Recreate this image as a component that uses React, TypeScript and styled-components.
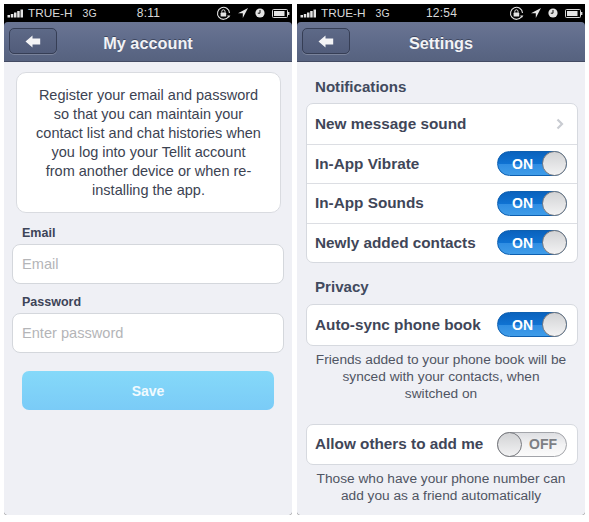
import React from 'react';
import styled, { createGlobalStyle } from 'styled-components';

const GlobalStyle = createGlobalStyle`
  html, body {
    margin: 0;
    background: #fff;
    font-family: "Liberation Sans", Arial, sans-serif;
  }
`;

const Page = styled.div`
  width: 589px;
  height: 522px;
  box-sizing: border-box;
  padding: 4px 4px 7px;
  display: flex;
  gap: 5px;
  overflow: hidden;
`;

const Phone = styled.div`
  width: 288px;
  height: 511px;
  display: flex;
  flex-direction: column;
  background: #000;
  border-radius: 0 0 3px 3px;
  overflow: hidden;
`;

const StatusBar = styled.div`
  height: 18px;
  flex: none;
  display: grid;
  grid-template-columns: 1fr auto 1fr;
  align-items: center;
  padding: 0 2px 0 3px;
  color: #d8d8d8;
  font-size: 11px;
`;

const StatusLeft = styled.div`
  display: flex;
  align-items: center;
  gap: 4px;
`;

const Carrier = styled.span`
  font-size: 11.8px;
`;

const Network = styled.span`
  margin-left: 6px;
  font-size: 10.5px;
`;

const Clock = styled.span`
  font-size: 12px;
  letter-spacing: 0.2px;
`;

const StatusRight = styled.div`
  display: flex;
  align-items: center;
  justify-content: flex-end;
  gap: 7px;
`;

const NavBar = styled.div`
  height: 40px;
  flex: none;
  position: relative;
  display: flex;
  align-items: center;
  justify-content: center;
  padding-top: 3px;
  background: linear-gradient(#6a7593 0, #5f6b8a 50%, #56627f 100%);
  border-bottom: 1px solid #434b63;
  box-sizing: border-box;
  border-radius: 4px 4px 0 0;
`;

const BackButton = styled.div`
  position: absolute;
  left: 5px;
  top: 6px;
  width: 48px;
  height: 26px;
  box-sizing: border-box;
  display: flex;
  align-items: center;
  justify-content: center;
  border: 1px solid #363e55;
  border-radius: 5px;
  background: linear-gradient(#5d6987, #515c7a);
  box-shadow: 0 1px 0 rgba(255, 255, 255, 0.2);
`;

const NavTitle = styled.div`
  color: #f2f3f6;
  font-size: 16.3px;
  font-weight: 700;
  text-shadow: 0 -1px 0 rgba(40, 46, 66, 0.6);
`;

const Body = styled.div<{ $pad: string }>`
  flex: 1;
  display: flex;
  flex-direction: column;
  background: #eff0f5;
  padding: ${(p) => p.$pad};
`;

const InfoCard = styled.div`
  box-sizing: border-box;
  width: 265px;
  height: 141px;
  margin-left: 12px;
  padding: 13px 0 0;
  background: #fff;
  border: 1px solid #d9dbe0;
  border-radius: 10px;
  color: #3c4352;
  font-size: 14.5px;
  line-height: 19px;
  text-align: center;
`;

const FieldLabel = styled.div<{ $top: number }>`
  margin: ${(p) => p.$top}px 0 4px 18px;
  color: #3d4458;
  font-size: 12.5px;
  line-height: 14px;
  font-weight: 700;
`;

const Field = styled.div`
  box-sizing: border-box;
  width: 272px;
  height: 40px;
  margin-left: 8px;
  padding-left: 9px;
  display: flex;
  align-items: center;
  background: #fff;
  border: 1px solid #d4d7dc;
  border-radius: 8px;
  color: #b4b5b8;
  font-size: 14.6px;
`;

const SaveButton = styled.div`
  box-sizing: border-box;
  width: 252px;
  height: 39px;
  margin: 18px 0 0 18px;
  display: flex;
  align-items: center;
  justify-content: center;
  background: linear-gradient(#85d9f9, #7acbf7);
  border-radius: 7px;
  color: #f1fafe;
  font-size: 14px;
  font-weight: 700;
`;

const SectionTitle = styled.div<{ $top: number; $gap: number }>`
  margin: ${(p) => p.$top}px 0 ${(p) => p.$gap}px 18px;
  color: #414a5e;
  font-size: 15.1px;
  line-height: 16px;
  font-weight: 700;
`;

const Group = styled.div`
  box-sizing: border-box;
  width: 272px;
  margin-left: 9px;
  background: #fff;
  border: 1px solid #d6d9df;
  border-radius: 7px;
`;

const Row = styled.div`
  box-sizing: border-box;
  height: 39.5px;
  padding: 0 9px 0 8px;
  display: flex;
  align-items: center;
  justify-content: space-between;
  color: #3f4658;
  font-size: 15.3px;
  font-weight: 700;
  & + & {
    border-top: 1px solid #dcdee3;
  }
`;

const Track = styled.div<{ $on: boolean }>`
  position: relative;
  box-sizing: border-box;
  width: 70px;
  height: 25px;
  flex: none;
  margin-right: 1px;
  display: flex;
  align-items: center;
  border-radius: 13px;
  font-size: 14px;
  font-weight: 700;
  ${(p) =>
    p.$on
      ? `
    padding-left: 14px;
    color: #fff;
    background: linear-gradient(#0a62bd 0, #0f72d2 50%, #2f8de3 51%, #3f9ce8 100%);
    border: 1px solid #0d5fb0;
  `
      : `
    padding-left: 31px;
    color: #7d7f84;
    background: linear-gradient(#dedfe2 0, #f2f2f3 50%, #fbfbfb 100%);
    border: 1px solid #a3a5aa;
  `}
`;

const Knob = styled.div<{ $on: boolean }>`
  position: absolute;
  top: -1px;
  ${(p) => (p.$on ? 'right: -1px;' : 'left: -1px;')}
  width: 25px;
  height: 25px;
  box-sizing: border-box;
  border: 1px solid #77797e;
  border-radius: 50%;
  background: linear-gradient(#d2d3d5, #f2f2f3);
`;

const Chevron = styled.svg`
  margin-right: 4px;
`;

const Note = styled.div<{ $bottom: number }>`
  margin: 5px 0 ${(p) => p.$bottom}px;
  color: #4f5563;
  font-size: 13.7px;
  line-height: 17px;
  text-align: center;
`;

const Signal = () => (
  <svg width="17" height="9" viewBox="0 0 17 9">
    <g fill="#e2e2e2">
      <rect x="0.5" y="6" width="2.5" height="2.5" />
      <rect x="3.8" y="5" width="2.5" height="3.5" />
      <rect x="7" y="3.5" width="2.5" height="5" />
      <rect x="10.2" y="2" width="2.5" height="6.5" />
      <rect x="13.5" y="0.5" width="2.5" height="8" />
    </g>
  </svg>
);

const StatusIcons = () => (
  <StatusRight>
    <svg width="15" height="15" viewBox="0 0 15 15">
      <path d="M12.6 10.5A6 6 0 1 1 13.5 7" fill="none" stroke="#e4e4e4" strokeWidth="1.1" />
      <path d="M11.2 9.6h3.2l-1.6 2.4z" fill="#e4e4e4" />
      <rect x="4.6" y="6.6" width="5.6" height="4" rx="0.6" fill="#e4e4e4" />
      <path d="M5.8 6.6V5.4a1.6 1.6 0 0 1 3.2 0v1.2" fill="none" stroke="#e4e4e4" strokeWidth="1" />
    </svg>
    <svg width="10" height="10" viewBox="0 0 10 10">
      <path d="M10 0 0 5.2h4.8V10z" fill="#e4e4e4" />
    </svg>
    <svg width="10" height="10" viewBox="0 0 10 10">
      <circle cx="5" cy="5" r="4.6" fill="#e4e4e4" />
      <path d="M5 2v3.2H2.8" fill="none" stroke="#111" strokeWidth="1" />
    </svg>
    <svg width="18" height="9" viewBox="0 0 18 9">
      <rect x="0.5" y="0.5" width="15" height="8" rx="1" fill="none" stroke="#d8d8d8" />
      <rect x="2" y="2" width="10.5" height="5" fill="#e4e4e4" />
      <rect x="16" y="3" width="1.4" height="3" fill="#d8d8d8" />
    </svg>
  </StatusRight>
);

const BackArrow = () => (
  <svg width="16" height="13" viewBox="0 0 16 13">
    <path d="M0.5 6.5 7.5 0.5V3.5H15.2V9.5H7.5V12.5z" fill="#f4f4f6" />
  </svg>
);

const Header: React.FC<{ carrier: string; time: string; title: string }> = ({ carrier, time, title }) => (
  <>
    <StatusBar>
      <StatusLeft>
        <Signal />
        <Carrier>{carrier}</Carrier>
        <Network>3G</Network>
      </StatusLeft>
      <Clock>{time}</Clock>
      <StatusIcons />
    </StatusBar>
    <NavBar>
      <BackButton>
        <BackArrow />
      </BackButton>
      <NavTitle>{title}</NavTitle>
    </NavBar>
  </>
);

const Toggle: React.FC<{ on: boolean }> = ({ on }) => (
  <Track $on={on}>
    {on ? 'ON' : 'OFF'}
    <Knob $on={on} />
  </Track>
);

const ToggleRow: React.FC<{ label: string; on?: boolean }> = ({ label, on = true }) => (
  <Row>
    {label}
    <Toggle on={on} />
  </Row>
);

export default function App() {
  return (
    <Page>
      <GlobalStyle />
      <Phone>
        <Header carrier="TRUE-H" time="8:11" title="My account" />
        <Body $pad="10px 0 0">
          <InfoCard>
            Register your email and password
            <br />
            so that you can maintain your
            <br />
            contact list and chat histories when
            <br />
            you log into your Tellit account
            <br />
            from another device or when re-
            <br />
            installing the app.
          </InfoCard>
          <FieldLabel $top={13}>Email</FieldLabel>
          <Field>Email</Field>
          <FieldLabel $top={11}>Password</FieldLabel>
          <Field>Enter password</Field>
          <SaveButton>Save</SaveButton>
        </Body>
      </Phone>
      <Phone>
        <Header carrier="TRUE-H" time="12:54" title="Settings" />
        <Body $pad="0">
          <SectionTitle $top={17} $gap={8}>
            Notifications
          </SectionTitle>
          <Group>
            <Row>
              New message sound
              <Chevron width="8" height="12" viewBox="0 0 8 12">
                <path d="M1.5 1.5 6 6 1.5 10.5" fill="none" stroke="#c9ccd2" strokeWidth="2.2" />
              </Chevron>
            </Row>
            <ToggleRow label="In-App Vibrate" />
            <ToggleRow label="In-App Sounds" />
            <ToggleRow label="Newly added contacts" />
          </Group>
          <SectionTitle $top={16} $gap={9}>
            Privacy
          </SectionTitle>
          <Group>
            <ToggleRow label="Auto-sync phone book" />
          </Group>
          <Note $bottom={22}>
            Friends added to your phone book will be
            <br />
            synced with your contacts, when
            <br />
            switched on
          </Note>
          <Group>
            <ToggleRow label="Allow others to add me" on={false} />
          </Group>
          <Note $bottom={0}>
            Those who have your phone number can
            <br />
            add you as a friend automatically
          </Note>
        </Body>
      </Phone>
    </Page>
  );
}
